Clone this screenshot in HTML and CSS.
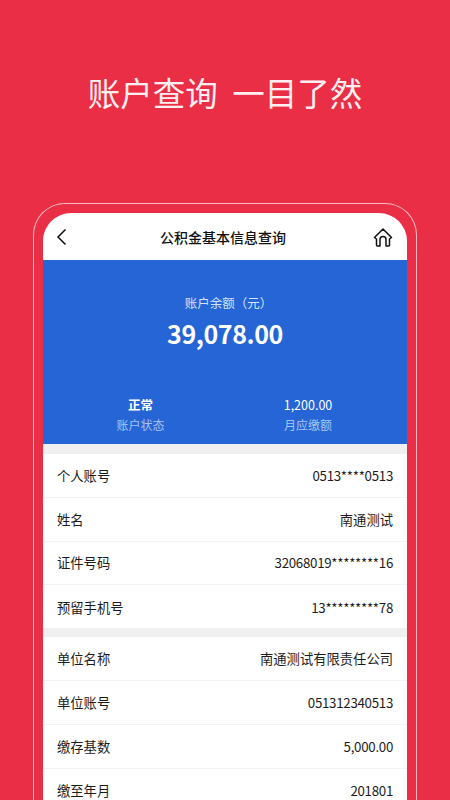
FILE: index.html
```html
<!DOCTYPE html>
<html lang="zh-CN">
<head>
<meta charset="utf-8">
<title>账户查询</title>
<link rel="stylesheet" href="styles.css">
</head>
<body>
<main class="page">
  <h1 class="headline">账户查询 一目了然</h1>
  <div class="frame">
    <div class="screen">
      <header class="nav">
        <svg class="icon" width="24" height="24" viewBox="0 0 24 24"><path d="M14.5 4.5 L7 12 L14.5 19.5" fill="none" stroke="#111" stroke-width="1.5"/></svg>
        <div class="nav-title">公积金基本信息查询</div>
        <svg class="icon" width="24" height="24" viewBox="0 0 24 24"><path d="M3.5 12.5 L12 4 L20.5 12.5 L18.5 14 L18.5 20 Q18.5 21 17.5 21 L15 21 L15 14.5 Q15 11.5 12 11.5 Q9 11.5 9 14.5 L9 21 L6.5 21 Q5.5 21 5.5 20 L5.5 14 Z" fill="none" stroke="#111" stroke-width="1.5" stroke-linejoin="round"/></svg>
      </header>
      <section class="hero">
        <div class="balance-label">账户余额（元）</div>
        <div class="balance">39,078.00</div>
        <div class="stats">
          <div class="stat"><div class="stat-value bold">正常</div><div class="stat-label">账户状态</div></div>
          <div class="stat"><div class="stat-value">1,200.00</div><div class="stat-label">月应缴额</div></div>
        </div>
      </section>
      <div class="group">
        <div class="row"><span>个人账号</span><span class="num">0513****0513</span></div>
        <div class="row"><span>姓名</span><span>南通测试</span></div>
        <div class="row"><span>证件号码</span><span class="num">32068019********16</span></div>
        <div class="row"><span>预留手机号</span><span class="num">13*********78</span></div>
      </div>
      <div class="group">
        <div class="row"><span>单位名称</span><span>南通测试有限责任公司</span></div>
        <div class="row"><span>单位账号</span><span class="num">051312340513</span></div>
        <div class="row"><span>缴存基数</span><span class="num">5,000.00</span></div>
        <div class="row"><span>缴至年月</span><span class="num">201801</span></div>
      </div>
    </div>
  </div>
</main>
</body>
</html>
```
FILE: styles.css
```css
html, body {
  margin: 0;
  height: 100%;
  overflow: hidden;
}
.page {
  height: 800px;
  overflow: hidden;
  background: #ea2e45;
  font-family: "Noto Sans CJK SC", "Noto Sans", sans-serif;
  display: flex;
  flex-direction: column;
  align-items: center;
}
.headline {
  margin: 0;
  padding-top: 68px;
  height: 203px;
  flex: none;
  box-sizing: border-box;
  font-size: 32.5px;
  line-height: 48px;
  font-weight: 400;
  color: #fdeef0;
  word-spacing: 7px;
  white-space: pre;
}
.frame {
  width: 384px;
  flex: none;
  box-sizing: border-box;
  border: 1px solid #f7b9c1;
  border-bottom: 0;
  border-radius: 32px 32px 0 0;
  padding: 9px 9px 0;
  height: 597px;
}
.screen {
  background: #fff;
  border-radius: 28px 28px 0 0;
  overflow: hidden;
  height: 588px;
}
.nav {
  height: 47px;
  display: flex;
  align-items: center;
  justify-content: space-between;
  padding: 0 12px 0 8px;
}
.icon { flex: none; }
.nav-title {
  font-size: 14px;
  font-weight: 500;
  color: #111;
}
.hero {
  height: 184px;
  background: #2565d5;
  color: #fff;
  display: flex;
  flex-direction: column;
  align-items: center;
  padding-top: 34px;
  box-sizing: border-box;
}
.balance-label {
  font-size: 12.5px;
  line-height: 18px;
  color: #d5e2f8;
  padding-left: 7px;
}
.balance {
  font-size: 25px;
  line-height: 36px;
  font-weight: 700;
  margin-top: 3px;
  letter-spacing: -0.4px;
}
.stats {
  align-self: stretch;
  display: grid;
  grid-template-columns: 195px 140px;
  margin-top: 44px;
  text-align: center;
}
.stat-value {
  font-size: 12.5px;
  line-height: 20px;
}
.stat-value.bold { font-weight: 700; }
.stat-label {
  font-size: 12px;
  line-height: 20px;
  color: #a9c4f0;
}
.group {
  border-top: 10px solid #f0f0f0;
}
.group + .group {
  border-top-width: 9px;
  margin-top: -0.75px;
}
.row {
  height: 43.75px;
  box-sizing: border-box;
  display: flex;
  align-items: center;
  justify-content: space-between;
  padding: 0 14px;
  font-size: 13.3px;
  color: #1c1c1c;
  border-bottom: 1px solid #f3f3f3;
}
.row:last-child { border-bottom: 0; }
.num { letter-spacing: -0.28px; }
```
